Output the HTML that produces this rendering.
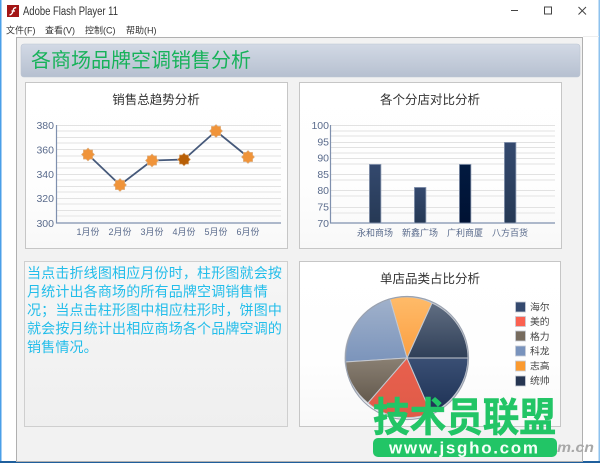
<!DOCTYPE html>
<html><head><meta charset="utf-8"><style>
html,body{margin:0;padding:0;width:600px;height:463px;overflow:hidden;background:#fff}
svg{display:block}
text{font-family:"Liberation Sans","Noto Sans CJK SC",sans-serif}
.t{fill:#333;font-size:12.5px;text-anchor:middle}
.n{fill:#5a6b8c;font-size:10.5px;text-anchor:end}
.c{fill:#5a6b8c;font-size:9px;text-anchor:middle}
.l{fill:#444;font-size:9.8px}
.p{fill:#22bdea;font-size:14px;letter-spacing:.17px}
.g{stroke:#e2e2e2;stroke-width:1}
.g2{stroke:#f0f0f0;stroke-width:2}
.m{font-size:9px;fill:#333}
</style></head><body>
<svg width="600" height="463" viewBox="0 0 600 463" xmlns="http://www.w3.org/2000/svg">
<defs>
<linearGradient id="hd" x1="0" y1="0" x2="0" y2="1"><stop offset="0" stop-color="#d2d9e5"/><stop offset="1" stop-color="#b6c0d0"/></linearGradient>
<linearGradient id="pn" x1="0" y1="0" x2="0" y2="1"><stop offset="0" stop-color="#fff"/><stop offset=".6" stop-color="#fefefe"/><stop offset="1" stop-color="#f8f8f8"/></linearGradient>
<linearGradient id="tp" x1="0" y1="0" x2="0" y2="1"><stop offset="0" stop-color="#f6f6f6"/><stop offset="1" stop-color="#efefef"/></linearGradient>
<linearGradient id="bar" x1="0" y1="0" x2="0" y2="1"><stop offset="0" stop-color="#34496e"/><stop offset="1" stop-color="#263955"/></linearGradient>
<linearGradient id="bar2" x1="0" y1="0" x2="0" y2="1"><stop offset="0" stop-color="#021a40"/><stop offset="1" stop-color="#001233"/></linearGradient>
<linearGradient id="s1" x1="0" y1="0" x2="0" y2="1"><stop offset="0" stop-color="#616e82"/><stop offset="1" stop-color="#2f3f58"/></linearGradient>
<linearGradient id="s2" x1="0" y1="0" x2="0" y2="1"><stop offset="0" stop-color="#ffbb69"/><stop offset="1" stop-color="#fb9f42"/></linearGradient>
<linearGradient id="s3" x1="0" y1="0" x2="0" y2="1"><stop offset="0" stop-color="#a0b1cb"/><stop offset="1" stop-color="#7b94bb"/></linearGradient>
<linearGradient id="s4" x1="0" y1="0" x2="0" y2="1"><stop offset="0" stop-color="#8a8073"/><stop offset="1" stop-color="#63594d"/></linearGradient>
<linearGradient id="s5" x1="0" y1="0" x2="0" y2="1"><stop offset="0" stop-color="#e8604e"/><stop offset="1" stop-color="#e05b48"/></linearGradient>
<linearGradient id="s6" x1="0" y1="0" x2="0" y2="1"><stop offset="0" stop-color="#3a4f74"/><stop offset="1" stop-color="#1d3154"/></linearGradient>
<path id="st" d="M0 -6.500L1.900 -4.600L4.600 -4.600L4.600 -1.900L6.500 0L4.600 1.900L4.600 4.600L1.900 4.600L0 6.500L-1.900 4.600L-4.600 4.600L-4.600 1.900L-6.500 0L-4.600 -1.900L-4.600 -4.600L-1.900 -4.600Z"/>
</defs>

<!-- window chrome -->
<rect x="0" y="0" width="600" height="463" fill="#fff"/>
<rect x="0" y="0" width="1.500" height="463" fill="#4a9fe8"/>
<rect x="598.500" y="0" width="1.500" height="463" fill="#8ec2ee"/>
<rect x="0" y="461" width="600" height="2" fill="#1f5f9c"/>
<rect x="583" y="36" width="16" height="1" fill="#eeeeee"/>
<rect x="7" y="5" width="12" height="12" fill="#a31515"/>
<path d="M9.500 15c3 -.5 3.300 -3.500 3.900 -5.500.3 -1 1 -1.800 2.800 -1.800M11.500 11h3.500" fill="none" stroke="#fff" stroke-width="1.300"/>
<text x="23" y="15" font-size="11.500" fill="#333" textLength="95" lengthAdjust="spacingAndGlyphs">Adobe Flash Player 11</text>
<text x="6" y="33.500" class="m">文件(F)</text>
<text x="45" y="33.500" class="m">查看(V)</text>
<text x="85" y="33.500" class="m">控制(C)</text>
<text x="126" y="33.500" class="m">帮助(H)</text>
<path d="M511 10.500h7" stroke="#444" stroke-width="1"/>
<rect x="544.500" y="7" width="7" height="7" fill="none" stroke="#444" stroke-width="1"/>
<path d="M578.500 7l7.500 7.500M586 7l-7.500 7.500" stroke="#444" stroke-width="1"/>

<!-- stage -->
<rect x="16.500" y="37.500" width="566" height="424" fill="#f2f2f2" stroke="#b0b0b0"/>
<rect x="21" y="44" width="559" height="33" rx="3" fill="url(#hd)" stroke="#bcc5d2" stroke-width=".6"/>
<text x="31" y="67" font-size="20px" fill="#17b25a">各商场品牌空调销售分析</text>

<!-- panel 1 -->
<rect x="25.500" y="82.500" width="262" height="166" fill="url(#pn)" stroke="#c6c6c6"/>
<text x="156" y="104" class="t">销售总趋势分析</text>
<g>
<path class="g" d="M56 125.500H281M56 137.500H281M56 149.500H281M56 162.500H281M56 174.500H281M56 186.500H281M56 198.500H281M56 210.500H281"/>
<path class="g2" d="M56 131H281M56 143H281M56 156H281M56 168H281M56 180H281M56 192H281M56 204H281M56 216H281"/>
<path d="M56.500 125V223H281" fill="none" stroke="#7f90ae" stroke-width="1.200"/>
<text x="54" y="129" class="n">380</text><text x="54" y="153.500" class="n">360</text><text x="54" y="178" class="n">340</text><text x="54" y="202" class="n">320</text><text x="54" y="227" class="n">300</text>
<text x="88" y="235" class="c">1月份</text><text x="120" y="235" class="c">2月份</text><text x="152" y="235" class="c">3月份</text><text x="184" y="235" class="c">4月份</text><text x="216" y="235" class="c">5月份</text><text x="248" y="235" class="c">6月份</text>
<polyline points="88,154.500 120,185 152,160.500 184,159.500 216,131 248,157" fill="none" stroke="#46597a" stroke-width="1.800"/>
<g fill="#f0943a" stroke="#dcae80" stroke-width=".6">
<use href="#st" x="88" y="154.500"/><use href="#st" x="120" y="185"/><use href="#st" x="152" y="160.500"/>
<use href="#st" x="184" y="159.500" fill="#b85f06"/><use href="#st" x="216" y="131"/><use href="#st" x="248" y="157"/>
</g>
</g>

<!-- panel 2 -->
<rect x="299.500" y="82.500" width="262" height="166" fill="url(#pn)" stroke="#c6c6c6"/>
<text x="430" y="104" class="t">各个分店对比分析</text>
<path class="g" d="M330 125.500H555M330 142.500H555M330 147.500H555M330 158.500H555M330 174.500H555M330 190.500H555M330 207.500H555"/>
<path class="g2" d="M330 131H555M330 136H555M330 153H555M330 164H555M330 180H555M330 196H555M330 213H555"/>
<path d="M330.500 125V223H555" fill="none" stroke="#7f90ae" stroke-width="1.200"/>
<text x="329" y="129" class="n">100</text><text x="329" y="145.500" class="n">95</text><text x="329" y="161.500" class="n">90</text><text x="329" y="178" class="n">85</text><text x="329" y="194" class="n">80</text><text x="329" y="210.500" class="n">75</text><text x="329" y="227" class="n">70</text>
<g stroke="#8e9cb4" stroke-width=".8">
<rect x="369.400" y="164.400" width="11.500" height="58.600" fill="url(#bar)"/>
<rect x="414.400" y="187.400" width="11.500" height="35.600" fill="url(#bar)"/>
<rect x="459.400" y="164.400" width="11.500" height="58.600" fill="url(#bar2)"/>
<rect x="504.400" y="142.400" width="11.500" height="80.600" fill="url(#bar)"/>
</g>
<text x="375" y="236" class="c">永和商场</text><text x="420" y="236" class="c">新鑫广场</text><text x="465" y="236" class="c">广利商厦</text><text x="510" y="236" class="c">八方百货</text>

<!-- text panel -->
<rect x="24.500" y="261.500" width="263" height="165" fill="url(#tp)" stroke="#cfcfcf"/>
<text class="p" x="27" y="278">当点击折线图相应月份时，柱形图就会按</text>
<text class="p" x="27" y="296.500">月统计出各商场的所有品牌空调销售情</text>
<text class="p" x="27" y="315">况；当点击柱形图中相应柱形时，饼图中</text>
<text class="p" x="27" y="333.500">就会按月统计出相应商场各个品牌空调的</text>
<text class="p" x="27" y="352">销售情况。</text>

<!-- panel 4 -->
<rect x="299.500" y="261.500" width="261" height="165" fill="url(#pn)" stroke="#c6c6c6"/>
<text x="430" y="283" class="t">单店品类占比分析</text>
<g stroke="#c4c8d0" stroke-width="1">
<path d="M407 358L432 303A61 61 0 0 1 468 358Z" fill="url(#s1)"/>
<path d="M407 358L390 299A61 61 0 0 1 432 303Z" fill="url(#s2)"/>
<path d="M407 358L345 362A62 62 0 0 1 390 299Z" fill="url(#s3)"/>
<path d="M407 358L368 403A61 61 0 0 1 345 362Z" fill="url(#s4)"/>
<path d="M407 358L431 413A61 61 0 0 1 368 403Z" fill="url(#s5)"/>
<path d="M407 358H468A61 61 0 0 1 431 413Z" fill="url(#s6)"/>
</g>
<circle cx="407" cy="358" r="61.500" fill="none" stroke="#9aa2b0" stroke-width="1.200"/>
<g stroke="#c8cdd6" stroke-width=".8">
<rect x="515.500" y="302" width="10" height="10" fill="#34496e"/>
<rect x="515.500" y="316.500" width="10" height="10" fill="#fb6150"/>
<rect x="515.500" y="331" width="10" height="10" fill="#766b5e"/>
<rect x="515.500" y="346" width="10" height="10" fill="#7993bd"/>
<rect x="515.500" y="361" width="10" height="10" fill="#fb9a2f"/>
<rect x="515.500" y="376" width="10" height="10" fill="#263652"/>
</g>
<text x="530" y="310.500" class="l">海尔</text><text x="530" y="325" class="l">美的</text><text x="530" y="340" class="l">格力</text><text x="530" y="354.500" class="l">科龙</text><text x="530" y="369.500" class="l">志高</text><text x="530" y="384" class="l">统帅</text>

<!-- watermark -->
<text x="373" y="431" font-size="40" font-weight="bold" fill="#22c566" stroke="#22c566" stroke-width=".6" textLength="183" lengthAdjust="spacingAndGlyphs" style="font-family:'Noto Sans CJK SC',sans-serif">技术员联盟</text>
<rect x="373" y="438" width="184" height="19" rx="5" fill="#22c566"/>
<text x="389" y="453.500" font-size="17" font-weight="bold" fill="#f4fff8" textLength="149">www.jsgho.com</text>
<text x="557" y="452" font-size="14" font-weight="bold" font-style="italic" fill="#a8a8a8" textLength="37" lengthAdjust="spacingAndGlyphs">m.cn</text>
</svg>
</body></html>
